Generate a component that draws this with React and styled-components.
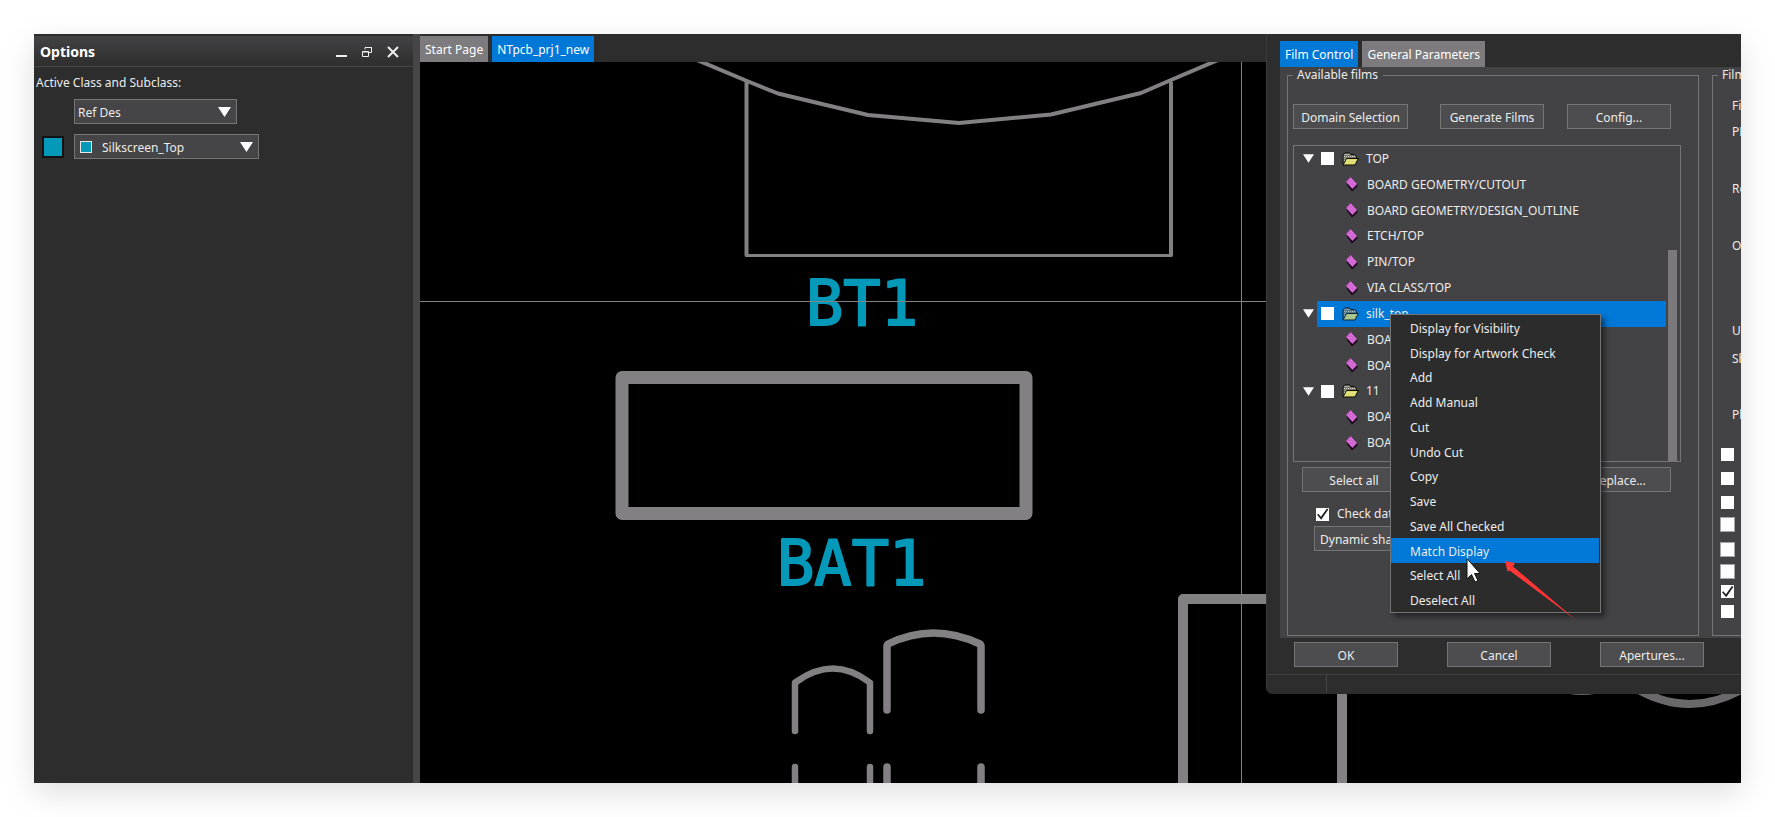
import React from "react";
import styled, { createGlobalStyle, css } from "styled-components";

const GlobalStyle = createGlobalStyle`
  *, *::before, *::after { box-sizing: border-box; }
  body {
    margin: 0;
    background: #fff;
    color: #ececec;
    font: 12px/16px "Noto Sans", "Open Sans", sans-serif;
  }
  button, select, input { font: inherit; color: inherit; margin: 0; }
`;

const BLUE = "#0078d7";
const TEAL = "#0499b9";
const TRACE = "#828082";

const Page = styled.div`
  min-height: 100vh;
  padding: 34px;
  display: flex;
`;

const Window = styled.main`
  position: relative;
  flex: 1;
  min-width: 0;
  display: flex;
  background: #2d2d2d;
  box-shadow: 0 10px 30px rgba(0, 0, 0, 0.13);
`;

/* ---------- options panel ---------- */

const OptionsPanel = styled.aside`
  flex: none;
  width: 379px;
  padding-top: 2px;
`;

const PanelHeader = styled.header`
  height: 31px;
  padding: 2px 13px 0 6px;
  display: flex;
  align-items: center;
  gap: 12px;
  background: linear-gradient(#434244, #2e2e2e);
  border-bottom: 1px solid #454546;
`;

const PanelTitle = styled.h1`
  flex: 1;
  margin: 0;
  font-size: 14px;
  line-height: 20px;
  font-weight: 700;
  color: #fff;
`;

const IconButton = styled.button`
  width: 14px;
  height: 14px;
  padding: 0;
  border: 0;
  background: none;
  svg { display: block; }
`;

const OptionsBody = styled.div`
  padding: 8px 2px;
`;

const FieldLabel = styled.label`
  display: block;
  margin-bottom: 8px;
`;

const FieldRow = styled.div`
  display: flex;
  align-items: center;
  padding-left: 6px;
  margin-bottom: 10px;
`;

const Swatch = styled.span`
  width: 22px;
  height: 22px;
  margin-right: 10px;
  border: 2px solid ${(p) => (p.$color ? "#101214" : "transparent")};
  background: ${(p) => p.$color || "transparent"};
`;

const SelectBox = styled.div`
  display: grid;
  align-items: center;
  width: ${(p) => p.$width};
  > * { grid-area: 1 / 1; }
  > svg { justify-self: end; margin-right: 6px; pointer-events: none; }
`;

const Select = styled.select`
  appearance: none;
  width: 100%;
  height: 25px;
  padding: 2px 24px 0 ${(p) => (p.$swatch ? "27px" : "3px")};
  border: 1px solid #757576;
  border-radius: 0;
  background: #454446;
`;

const LayerChip = styled.span`
  z-index: 1;
  width: 12px;
  height: 12px;
  margin-left: 6px;
  border: 1px solid #e8e8e8;
  background: ${TEAL};
`;

const Splitter = styled.div`
  flex: none;
  width: 7px;
  background: #464547;
`;

/* ---------- document area ---------- */

const Workspace = styled.section`
  flex: 1;
  min-width: 0;
  display: flex;
  flex-direction: column;
`;

const TabStrip = styled.nav`
  display: flex;
  gap: 4px;
  padding: ${(p) => p.$padding};
`;

const Tab = styled.button`
  height: 26px;
  padding: 2px 5px 0;
  border: 0;
  white-space: nowrap;
  background: ${(p) => (p.$active ? BLUE : "#7d7b7d")};
  color: #fff;
`;

const Board = styled.div`
  position: relative;
  flex: 1;
  min-height: 480px;
  background: #000;
  overflow: hidden;
`;

const BoardSvg = styled.svg`
  position: absolute;
  inset: 0;
  width: 100%;
  height: 100%;
`;

const SilkText = styled.text`
  font-family: "DejaVu Sans Mono", monospace;
  font-size: 62px;
  fill: ${TEAL};
  stroke: ${TEAL};
  stroke-width: 2px;
  stroke-linejoin: round;
`;

/* ---------- artwork dialog ---------- */

const Dialog = styled.section`
  position: absolute;
  top: 0;
  right: 0;
  width: 475px;
  overflow: hidden;
  background: #2e2d2e;
  border-left: 1px solid #3a3a3b;
  border-bottom-left-radius: 7px;
`;

const DialogBody = styled.div`
  display: flex;
  gap: 13px;
  margin-left: 13px;
  padding: 0 0 2px 7px;
  background: #434244;
`;

const Group = styled.fieldset`
  flex: none;
  width: ${(p) => p.$width};
  min-height: 569px;
  min-width: 0;
  margin: 0;
  padding: 0 17px 0 5px;
  border: 1px solid #757576;
`;

const Legend = styled.legend`
  padding: 0 5px 0 4px;
  white-space: nowrap;
`;

const PushButton = styled.button`
  width: ${(p) => p.$width || "104px"};
  height: 25px;
  padding: 2px 5px 0;
  border: 1px solid #757576;
  background: #4d4c4e;
  white-space: nowrap;
  overflow: hidden;
  text-align: ${(p) => p.$align || "center"};
`;

const FilmActions = styled.div`
  display: grid;
  grid-template-columns: 147px 127px 104px;
  margin: 21px 0 16px;
`;

const Tree = styled.div`
  height: 317px;
  display: flex;
  gap: 2px;
  padding-right: 3px;
  border: 1px solid #757576;
`;

const TreeList = styled.ul`
  flex: 1;
  margin: 0;
  padding: 0 0 5px;
  list-style: none;
  display: grid;
  grid-auto-rows: 1fr;
`;

const TreeThumb = styled.div`
  align-self: flex-end;
  width: 9px;
  height: 211px;
  background: #7b797b;
`;

const FolderRow = styled.li`
  display: flex;
  align-items: center;
  padding-left: 9px;
`;

const Toggle = styled.button`
  width: 14px;
  height: 12px;
  padding: 0;
  border: 0;
  background: none;
  svg { display: block; }
`;

const FolderItem = styled.label`
  flex: 1;
  display: flex;
  align-items: center;
  align-self: stretch;
  padding-left: 4px;
  background: ${(p) => (p.$selected ? BLUE : "transparent")};
  svg { margin: 0 7px 0 8px; opacity: ${(p) => (p.$selected ? 0.75 : 1)}; }
`;

const LayerRow = styled.li`
  display: flex;
  align-items: center;
  gap: 9px;
  padding-left: 52px;
  white-space: nowrap;
`;

const Checkbox = styled.input.attrs({ type: "checkbox" })`
  appearance: none;
  flex: none;
  width: 13px;
  height: 13px;
  background: #fff;
  ${(p) => p.$framed && css`outline: 1px solid #a5a5a5;`}
  &:checked::before {
    content: "";
    display: block;
    width: 13px;
    height: 13px;
    background: #222;
    clip-path: polygon(8% 55%, 18% 48%, 38% 72%, 84% 8%, 96% 14%, 40% 94%);
  }
`;

const SelectActions = styled.div`
  display: flex;
  justify-content: space-between;
  padding: 0 10px 0 9px;
  margin: 5px 0 14px;
`;

const CheckLabel = styled.label`
  display: flex;
  align-items: center;
  gap: 8px;
  height: 16px;
  margin: ${(p) => p.$margin || 0};
  white-space: nowrap;
`;

const StatusAction = styled.div`
  padding: 4px 0 0 21px;
`;

const OptionLine = styled.div`
  height: ${(p) => p.$height};
  padding-left: ${(p) => (p.$check ? "3px" : "14px")};
  white-space: nowrap;
  &:first-of-type { margin-top: 15px; }
`;

const DialogFooter = styled.footer`
  display: flex;
  gap: 49px;
  padding: 4px 0 7px 27px;
`;

const StatusBar = styled.div`
  height: 20px;
  border-top: 1px solid #404041;
  &::before {
    content: "";
    display: block;
    width: 60px;
    height: 17px;
    border-right: 1px solid #454546;
  }
`;

/* ---------- context menu and annotations ---------- */

const Menu = styled.ul`
  position: absolute;
  top: 280px;
  right: 140px;
  width: 211px;
  height: 299px;
  margin: 0;
  padding: 0 1px 0 0;
  list-style: none;
  display: grid;
  grid-auto-rows: 1fr;
  background: #2d2c2d;
  border: 1px solid #757576;
  box-shadow: 4px 4px 5px rgba(0, 0, 0, 0.45);
`;

const MenuItem = styled.button`
  width: 100%;
  height: 100%;
  padding: 3px 0 0 19px;
  border: 0;
  text-align: left;
  background: ${(p) => (p.$active ? BLUE : "transparent")};
`;

const Pointer = styled.svg`
  position: absolute;
  top: 522px;
  right: 155px;
  pointer-events: none;
`;

const Triangle = ({ width, height }) => (
  <svg width={width} height={height} viewBox="0 0 13 10" aria-hidden="true">
    <path d="M0 0H13L6.500 10Z" fill="#fff" />
  </svg>
);

const FolderIcon = () => (
  <svg width="17" height="14" viewBox="0 0 17 14" aria-hidden="true">
    <path d="M1 12.500V3L3 .800H7L9 2.500H12.500L14.500 4.500V6" fill="#77776c" stroke="#0c0c0c" />
    <path d="M2.500 2.500H8M2 4.500H13.500M2.500 6.500H13M2 8.500H4" stroke="#d4d4c8" strokeDasharray="1 1" />
    <path d="M1 13L4.500 6.500H16.300L13 13Z" fill="#dada68" stroke="#0c0c0c" />
    <path d="M4.500 8.500H14M3.500 10.500H13" stroke="#f3f3a4" strokeDasharray="1 1" />
  </svg>
);

const LayerIcon = () => (
  <svg width="12" height="15" viewBox="0 0 12 15" aria-hidden="true">
    <path d="M.500 5.500L1 8L6 14.500L11.500 9.500V7L6 11Z" fill="#1c061c" />
    <path d="M0 5L4.500 0L11 7L6.500 12Z" fill="#cf5fd0" />
    <path d="M2 5L7 10.500M3.500 3.500L8.500 9M5 2L10 7.500" stroke="#ef9bef" strokeDasharray="1 1" />
  </svg>
);

const films = [
  {
    name: "TOP",
    layers: ["BOARD GEOMETRY/CUTOUT", "BOARD GEOMETRY/DESIGN_OUTLINE", "ETCH/TOP", "PIN/TOP", "VIA CLASS/TOP"],
  },
  { name: "silk_top", selected: true, layers: ["BOARD GEOMETRY", "BOARD GEOMETRY"] },
  { name: "11", layers: ["BOARD GEOMETRY", "BOARD GEOMETRY"] },
];

const filmOptions = [
  ["Film name", "26px"],
  ["PDF Sequence", "57px"],
  ["Rotation", "57px"],
  ["Offset X", "85px"],
  ["Undefined line width", "28px"],
  ["Shape bounding box", "56px"],
  ["Plot mode", "41px"],
];

const filmChecks = [
  { height: "24px" },
  { height: "24px" },
  { height: "22px" },
  { height: "25px", framed: true },
  { height: "22px", framed: true },
  { height: "20px", framed: true },
  { height: "20px", checked: true },
  { height: "20px" },
];

const menuItems = [
  "Display for Visibility",
  "Display for Artwork Check",
  "Add",
  "Add Manual",
  "Cut",
  "Undo Cut",
  "Copy",
  "Save",
  "Save All Checked",
  "Match Display",
  "Select All",
  "Deselect All",
];

const BoardDrawing = () => (
  <BoardSvg viewBox="420 62 1321 721" preserveAspectRatio="xMinYMin slice" aria-label="Board layout">
    <g fill="none" stroke={TRACE} strokeLinejoin="round" strokeLinecap="round">
      <path strokeWidth="4" d="M697 60L747 81L778 93.500L868 115L959 123L1051 114.500L1141 93L1171 80L1218 60" />
      <path strokeWidth="4" d="M746.500 83V255M1171 83V255" />
      <path strokeWidth="3" d="M746.500 255.500H1171" />
      <rect strokeWidth="13" x="622" y="377.500" width="404" height="136" />
      <path strokeWidth="6.500" d="M795 683V731M870 683V731M795 767V790M870 767V790" />
      <path strokeWidth="6.500" d="M796 682Q833 655 869 682" />
      <path strokeWidth="7.500" d="M887 646V710M981 646V710M887 767V790M981 767V790" />
      <path strokeWidth="7.500" d="M888 644Q933 622 980 644" />
      <path strokeWidth="10" d="M1183 790V599H1290M1342 600V790" />
      <path strokeWidth="8" stroke="#6a686a" d="M1632 686Q1690 722 1748 686" />
      <path strokeWidth="8" stroke="#6a686a" d="M1556 686Q1582 696 1608 686" />
    </g>
    <SilkText x="806" y="325">BT1</SilkText>
    <SilkText x="777" y="585">BAT1</SilkText>
    <path d="M420 301.500H1741M1241.500 62V783" stroke="#828282" />
  </BoardSvg>
);

const FilmTree = () => (
  <Tree>
    <TreeList>
      {films.map((film) => (
        <React.Fragment key={film.name}>
          <FolderRow>
            <Toggle aria-label={`Collapse ${film.name}`}>
              <Triangle width={11} height={9} />
            </Toggle>
            <FolderItem $selected={film.selected}>
              <Checkbox />
              <FolderIcon />
              {film.name}
            </FolderItem>
          </FolderRow>
          {film.layers.map((layer, i) => (
            <LayerRow key={i}>
              <LayerIcon />
              {layer}
            </LayerRow>
          ))}
        </React.Fragment>
      ))}
    </TreeList>
    <TreeThumb />
  </Tree>
);

export default function App() {
  return (
    <Page>
      <GlobalStyle />
      <Window>
        <OptionsPanel>
          <PanelHeader>
            <PanelTitle>Options</PanelTitle>
            <IconButton aria-label="Minimize">
              <svg width="14" height="14"><path d="M2 11H13" stroke="#eee" strokeWidth="2" /></svg>
            </IconButton>
            <IconButton aria-label="Restore">
              <svg width="14" height="14" fill="none" stroke="#eee">
                <path d="M5 4.500V2.500H11.500V7.500H9M5 2.500H12" />
                <path d="M2.500 6.500H8.500V11.500H2.500ZM2 7H9" />
              </svg>
            </IconButton>
            <IconButton aria-label="Close">
              <svg width="14" height="14"><path d="M2 2L12 12M12 2L2 12" stroke="#eee" strokeWidth="2" /></svg>
            </IconButton>
          </PanelHeader>
          <OptionsBody>
            <FieldLabel htmlFor="active-class">Active Class and Subclass:</FieldLabel>
            <FieldRow>
              <Swatch />
              <SelectBox $width="163px">
                <Select id="active-class"><option>Ref Des</option></Select>
                <Triangle width={13} height={10} />
              </SelectBox>
            </FieldRow>
            <FieldRow>
              <Swatch $color={TEAL} />
              <SelectBox $width="185px">
                <Select $swatch aria-label="Subclass"><option>Silkscreen_Top</option></Select>
                <LayerChip />
                <Triangle width={13} height={10} />
              </SelectBox>
            </FieldRow>
          </OptionsBody>
        </OptionsPanel>
        <Splitter />
        <Workspace>
          <TabStrip $padding="2px 0 0">
            <Tab>Start Page</Tab>
            <Tab $active>NTpcb_prj1_new</Tab>
          </TabStrip>
          <Board><BoardDrawing /></Board>
        </Workspace>

        <Dialog>
          <TabStrip $padding="7px 0 0 13px">
            <Tab $active>Film Control</Tab>
            <Tab>General Parameters</Tab>
          </TabStrip>
          <DialogBody>
            <Group $width="412px">
              <Legend>Available films</Legend>
              <FilmActions>
                <PushButton $width="115px">Domain Selection</PushButton>
                <PushButton>Generate Films</PushButton>
                <PushButton>Config...</PushButton>
              </FilmActions>
              <FilmTree />
              <SelectActions>
                <PushButton>Select all</PushButton>
                <PushButton>Replace...</PushButton>
              </SelectActions>
              <CheckLabel $margin="0 0 0 23px">
                <Checkbox defaultChecked />
                Check database
              </CheckLabel>
              <StatusAction>
                <PushButton $width="200px" $align="left">Dynamic shapes</PushButton>
              </StatusAction>
            </Group>
            <Group $width="240px">
              <Legend>Film options</Legend>
              {filmOptions.map(([label, height]) => (
                <OptionLine key={label} $height={height}>{label}</OptionLine>
              ))}
              {filmChecks.map((check, i) => (
                <OptionLine key={i} $height={check.height} $check>
                  <Checkbox
                    aria-label={`Film option ${i + 1}`}
                    defaultChecked={check.checked}
                    $framed={check.framed}
                  />
                </OptionLine>
              ))}
            </Group>
          </DialogBody>
          <DialogFooter>
            <PushButton>OK</PushButton>
            <PushButton>Cancel</PushButton>
            <PushButton>Apertures...</PushButton>
          </DialogFooter>
          <StatusBar />
        </Dialog>

        <Menu>
          {menuItems.map((item) => (
            <li key={item}>
              <MenuItem $active={item === "Match Display"}>{item}</MenuItem>
            </li>
          ))}
        </Menu>
        <Pointer width="120" height="66" viewBox="1466 556 120 66" aria-hidden="true">
          <path d="M1467 558.500V579L1471.500 574.500L1475 582L1478 580.500L1474.500 573.500H1480Z" fill="#fff" stroke="#111" />
          <path d="M1505 561L1515 563L1513 566.500L1576 620L1509.500 570.500L1507.500 571.500Z" fill="#ff3636" />
        </Pointer>
      </Window>
    </Page>
  );
}
